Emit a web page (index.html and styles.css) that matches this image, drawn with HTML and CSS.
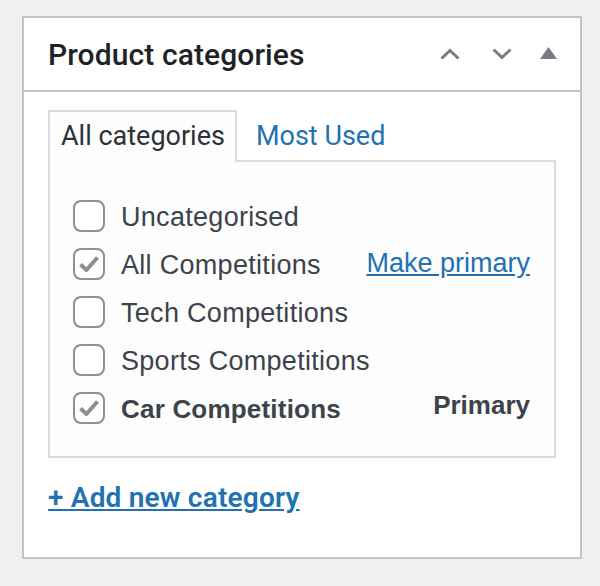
FILE: index.html
```html
<!DOCTYPE html>
<html>
<head>
<meta charset="utf-8">
<link rel="stylesheet" href="styles.css">
</head>
<body>
<div class="postbox">
  <div class="postbox-header">
    <h2 class="title">Product categories</h2>
    <div class="handle-actions">
      <span class="icon-btn"><svg width="20" height="12" viewBox="0 0 20 12"><path d="M1.5 10.5 L10 2.5 L18.5 10.5" fill="none" stroke="#787c82" stroke-width="3"/></svg></span>
      <span class="icon-btn"><svg width="20" height="12" viewBox="0 0 20 12"><path d="M1.5 1.5 L10 9.5 L18.5 1.5" fill="none" stroke="#787c82" stroke-width="3"/></svg></span>
      <span class="icon-btn tri"><svg width="17" height="12" viewBox="0 0 17 12"><path d="M8.5 0 L17 12 L0 12 Z" fill="#787c82"/></svg></span>
    </div>
  </div>
  <div class="inside">
    <ul class="tabs">
      <li class="tab active">All categories</li>
      <li class="tab"><a href="#">Most Used</a></li>
    </ul>
    <div class="panel">
      <ul class="checklist">
        <li class="item"><span class="cb"></span><span class="label">Uncategorised</span></li>
        <li class="item"><span class="cb checked"><svg width="22" height="18" viewBox="0 0 22 18"><path d="M2.5 9.5 L8.5 15 L19.5 2.5" fill="none" stroke="#8c8f94" stroke-width="4" stroke-linejoin="round"/></svg></span><span class="label">All Competitions</span><a href="#" class="make-primary">Make primary</a></li>
        <li class="item"><span class="cb"></span><span class="label">Tech Competitions</span></li>
        <li class="item"><span class="cb"></span><span class="label">Sports Competitions</span></li>
        <li class="item"><span class="cb checked"><svg width="22" height="18" viewBox="0 0 22 18"><path d="M2.5 9.5 L8.5 15 L19.5 2.5" fill="none" stroke="#8c8f94" stroke-width="4" stroke-linejoin="round"/></svg></span><span class="label bold">Car Competitions</span><span class="primary">Primary</span></li>
      </ul>
    </div>
    <div class="add-new"><a href="#">+ Add new category</a></div>
  </div>
</div>
</body>
</html>
```
FILE: styles.css
```css
html, body {
  margin: 0;
  padding: 0;
  background: #f0f0f1;
}
body {
  padding: 16px 0 0 22px;
  font-family: Roboto, "Liberation Sans", sans-serif;
}
.postbox {
  width: 556px;
  height: 539px;
  background: #fff;
  border: 2px solid #c3c4c7;
  box-sizing: content-box;
  display: flex;
  flex-direction: column;
}
.postbox-header {
  height: 72px;
  border-bottom: 2px solid #c3c4c7;
  display: flex;
  align-items: center;
  justify-content: space-between;
  padding: 0 23px 0 24px;
}
.title {
  margin: 0;
  font-family: Roboto, sans-serif;
  font-size: 30px;
  font-weight: 500;
  color: #1d2327;
  letter-spacing: 0.1px;
}
.handle-actions {
  display: flex;
  align-items: center;
  gap: 32px;
}
.icon-btn {
  display: flex;
  align-items: center;
}
.icon-btn.tri {
  margin-left: -4px;
  margin-top: -3px;
}
.inside {
  padding: 18px 24px 0 24px;
}
.tabs {
  list-style: none;
  margin: 0;
  padding: 0;
  display: flex;
  height: 50px;
}
.tab {
  font-family: Roboto, sans-serif;
  font-size: 27px;
  color: #2c3338;
  padding: 0 11px;
  line-height: 48px;
  border: 2px solid transparent;
  border-bottom: none;
}
.tab a {
  color: #2271b1;
  text-decoration: none;
  padding-left: 6px;
}
.tab.active {
  border-color: #dcdcde;
  background: #fdfdfd;
  position: relative;
  margin-bottom: -2px;
  height: 50px;
  z-index: 1;
  padding-left: 11px;
  padding-right: 10px;
}
.panel {
  border: 2px solid #dcdcde;
  background: #fdfdfd;
  width: 504px;
  height: 294px;
  box-sizing: content-box;
}
.checklist {
  list-style: none;
  margin: 0;
  padding: 38px 24px 0 23px;
  display: flex;
  flex-direction: column;
  gap: 16px;
}
.item {
  display: flex;
  align-items: center;
  height: 32px;
  font-family: "Liberation Sans", Arial, sans-serif;
  font-size: 27px;
  letter-spacing: 0.3px;
  color: #3c434a;
}
.label {
  position: relative;
  top: 1px;
}
.cb {
  width: 28px;
  height: 28px;
  border: 2px solid #8c8f94;
  border-radius: 8px;
  background: #fff;
  margin-right: 16px;
  flex: none;
  display: flex;
  align-items: center;
  justify-content: center;
}
.label.bold {
  font-weight: 700;
  font-size: 26px;
  letter-spacing: 0.2px;
}
.make-primary {
  margin-left: auto;
  color: #2271b1;
  text-decoration: underline;
  letter-spacing: 0;
  position: relative;
  top: -1px;
}
.primary {
  margin-left: auto;
  font-weight: 700;
  font-size: 26px;
  letter-spacing: 0;
  position: relative;
  top: -3px;
}
.add-new {
  margin-top: 23px;
  font-family: Roboto, sans-serif;
  font-size: 28px;
  font-weight: 600;
  letter-spacing: 0.2px;
}
.add-new a {
  color: #2271b1;
  text-decoration: underline;
}
```
